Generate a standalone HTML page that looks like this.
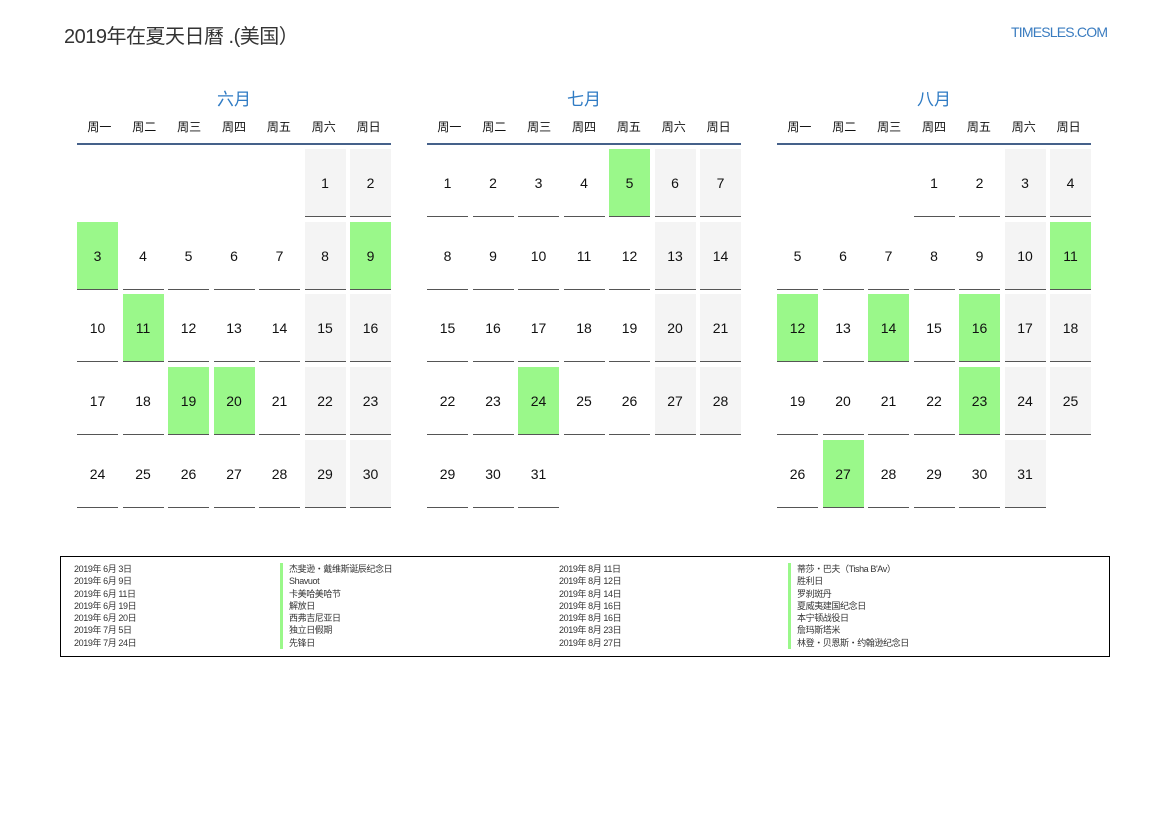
<!DOCTYPE html><html><head><meta charset="utf-8"><style>
*{margin:0;padding:0;box-sizing:border-box}
body{width:1169px;height:827px;background:#fff;font-family:"Liberation Sans","Noto Sans CJK SC",sans-serif;position:relative;overflow:hidden;color:#111}
.t{position:absolute;left:64px;top:20px;font-size:20px;color:#333;letter-spacing:-0.5px}
.s{position:absolute;left:1011px;top:24px;font-size:14px;color:#3a7cc0;letter-spacing:-0.8px}
.m{position:absolute;top:85px;width:314px}
.mt{text-align:center;font-size:17px;color:#2f7bc4;height:29px}
.wd{display:grid;grid-template-columns:repeat(7,1fr);font-size:12px;text-align:center;height:31px;line-height:26px;border-bottom:2px solid #45618a}
.g{display:grid;grid-template-columns:repeat(7,41px);column-gap:4.5px;row-gap:4.7px;margin-top:4px}
.g b{height:68px;border-bottom:1px solid #555;font-weight:normal;font-size:14px;display:flex;align-items:center;justify-content:center;padding-top:1px}
.g i{height:68px}
.g b.w{background:#f4f4f4}.g b.h{background:#9af88a}
.l{position:absolute;left:60px;top:556px;width:1050px;height:101px;border:1px solid #000;font-size:9px;color:#333;letter-spacing:-0.4px}
.c{position:absolute;top:6px;line-height:12.3px}
.n div{border-left:3px solid #9af88a;padding-left:6px}
</style></head><body>
<div class="t">2019年在夏天日曆 .(美国）</div>
<div class="s">TIMESLES.COM</div>

<div class="m" style="left:77px"><div class="mt">六月</div>
<div class="wd"><span>周一</span><span>周二</span><span>周三</span><span>周四</span><span>周五</span><span>周六</span><span>周日</span></div>
<div class="g"><i></i><i></i><i></i><i></i><i></i><b class="w">1</b><b class="w">2</b>
<b class="h">3</b><b>4</b><b>5</b><b>6</b><b>7</b><b class="w">8</b><b class="h">9</b>
<b>10</b><b class="h">11</b><b>12</b><b>13</b><b>14</b><b class="w">15</b><b class="w">16</b>
<b>17</b><b>18</b><b class="h">19</b><b class="h">20</b><b>21</b><b class="w">22</b><b class="w">23</b>
<b>24</b><b>25</b><b>26</b><b>27</b><b>28</b><b class="w">29</b><b class="w">30</b></div></div>

<div class="m" style="left:427px"><div class="mt">七月</div>
<div class="wd"><span>周一</span><span>周二</span><span>周三</span><span>周四</span><span>周五</span><span>周六</span><span>周日</span></div>
<div class="g"><b>1</b><b>2</b><b>3</b><b>4</b><b class="h">5</b><b class="w">6</b><b class="w">7</b>
<b>8</b><b>9</b><b>10</b><b>11</b><b>12</b><b class="w">13</b><b class="w">14</b>
<b>15</b><b>16</b><b>17</b><b>18</b><b>19</b><b class="w">20</b><b class="w">21</b>
<b>22</b><b>23</b><b class="h">24</b><b>25</b><b>26</b><b class="w">27</b><b class="w">28</b>
<b>29</b><b>30</b><b>31</b></div></div>

<div class="m" style="left:777px"><div class="mt">八月</div>
<div class="wd"><span>周一</span><span>周二</span><span>周三</span><span>周四</span><span>周五</span><span>周六</span><span>周日</span></div>
<div class="g"><i></i><i></i><i></i><b>1</b><b>2</b><b class="w">3</b><b class="w">4</b>
<b>5</b><b>6</b><b>7</b><b>8</b><b>9</b><b class="w">10</b><b class="h">11</b>
<b class="h">12</b><b>13</b><b class="h">14</b><b>15</b><b class="h">16</b><b class="w">17</b><b class="w">18</b>
<b>19</b><b>20</b><b>21</b><b>22</b><b class="h">23</b><b class="w">24</b><b class="w">25</b>
<b>26</b><b class="h">27</b><b>28</b><b>29</b><b>30</b><b class="w">31</b></div></div>

<div class="l">
<div class="c" style="left:13px"><div>2019年 6月 3日</div><div>2019年 6月 9日</div><div>2019年 6月 11日</div><div>2019年 6月 19日</div><div>2019年 6月 20日</div><div>2019年 7月 5日</div><div>2019年 7月 24日</div></div>
<div class="c n" style="left:219px"><div>杰斐逊・戴维斯诞辰纪念日</div><div>Shavuot</div><div>卡美哈美哈节</div><div>解放日</div><div>西弗吉尼亚日</div><div>独立日假期</div><div>先锋日</div></div>
<div class="c" style="left:498px"><div>2019年 8月 11日</div><div>2019年 8月 12日</div><div>2019年 8月 14日</div><div>2019年 8月 16日</div><div>2019年 8月 16日</div><div>2019年 8月 23日</div><div>2019年 8月 27日</div></div>
<div class="c n" style="left:727px"><div>蒂莎・巴夫（Tisha B'Av）</div><div>胜利日</div><div>罗刹斑丹</div><div>夏威夷建国纪念日</div><div>本宁顿战役日</div><div>詹玛斯塔米</div><div>林登・贝恩斯・约翰逊纪念日</div></div>
</div>
</body></html>
